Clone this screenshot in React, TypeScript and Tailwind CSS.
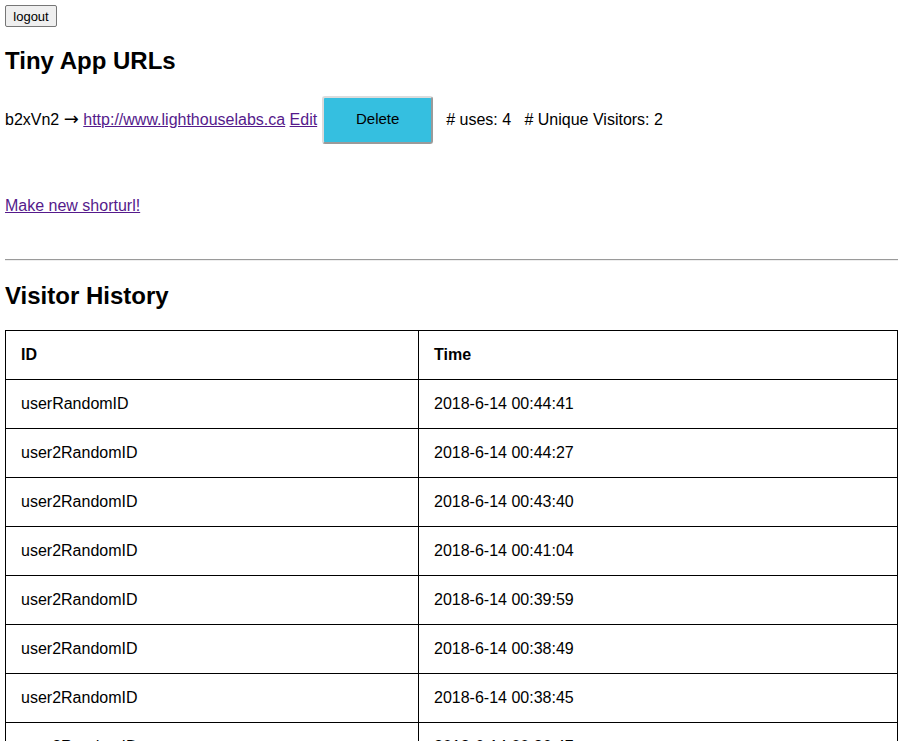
const visits = [
  { id: "userRandomID", time: "2018-6-14 00:44:41" },
  { id: "user2RandomID", time: "2018-6-14 00:44:27" },
  { id: "user2RandomID", time: "2018-6-14 00:43:40" },
  { id: "user2RandomID", time: "2018-6-14 00:41:04" },
  { id: "user2RandomID", time: "2018-6-14 00:39:59" },
  { id: "user2RandomID", time: "2018-6-14 00:38:49" },
  { id: "user2RandomID", time: "2018-6-14 00:38:45" },
  { id: "user2RandomID", time: "2018-6-14 00:36:47" },
];

const App = () => {
  return (
    <div className="px-[5px] pt-[5px] pb-10 text-[16px] text-black font-['Liberation_Sans',Arial,sans-serif]">
      <button className="block w-[52px] h-[22px] text-[13px] leading-none bg-[#efefef] border border-[#767676] rounded-[2px]">
        logout
      </button>

      <h1 className="mt-[20px] text-[24px] leading-[28px] font-bold">Tiny App URLs</h1>

      <div className="mt-[21px] flex items-center h-[47px]">
        <span>
          b2xVn2 <span className="font-['DejaVu_Sans',sans-serif] text-[18px] leading-none">&rarr;</span>&nbsp;
        </span>
        <a href="#" className="text-[#551a8b] underline">
          http://www.lighthouselabs.ca
        </a>
        <span>&nbsp;</span>
        <a href="#" className="text-[#551a8b] underline">
          Edit
        </a>
        <button className="ml-[5px] w-[111px] h-[48px] bg-[#35bfe0] border-2 border-[#9a9a9a] border-t-[#dcdcdc] border-l-[#dcdcdc] rounded-[3px] text-[15px]">
          Delete
        </button>
        <span className="ml-[13px]">
          # uses: 4 &nbsp; # Unique Visitors: 2
        </span>
      </div>

      <div className="mt-[54px] leading-[18px]">
        <a href="#" className="text-[#551a8b] underline">
          Make new shorturl!
        </a>
      </div>

      <hr className="mt-[44px] border-0 border-t border-b border-t-[#9a9a9a] border-b-[#eeeeee]" />

      <h2 className="mt-[21px] text-[24px] leading-[28px] font-bold">Visitor History</h2>

      <table className="mt-[20px] w-[893px] border-collapse border border-black">
        <thead>
          <tr>
            <th className="w-[413px] border border-black px-[15px] py-[15px] leading-[18px] text-left font-bold">ID</th>
            <th className="border border-black px-[15px] py-[15px] leading-[18px] text-left font-bold">Time</th>
          </tr>
        </thead>
        <tbody>
          {visits.map((v, i) => (
            <tr key={i}>
              <td className="border border-black px-[15px] py-[15px] leading-[18px]">{v.id}</td>
              <td className="border border-black px-[15px] py-[15px] leading-[18px]">{v.time}</td>
            </tr>
          ))}
        </tbody>
      </table>
    </div>
  );
};

export default App;
